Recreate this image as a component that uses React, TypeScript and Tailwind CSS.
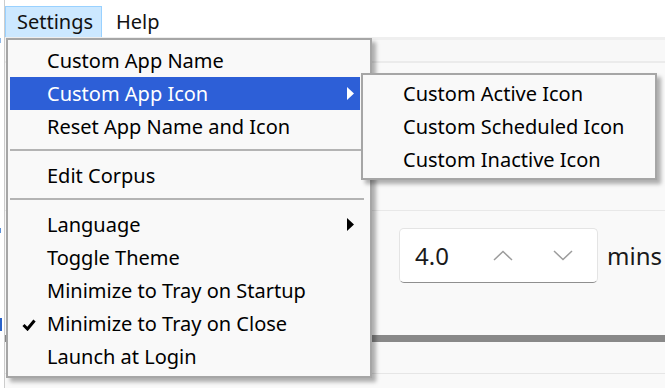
import React from "react";

function Arrow({ white }: { white?: boolean }) {
  return (
    <svg width="7" height="13" viewBox="0 0 7 13" className="block">
      <polygon points="0,0 7,6.5 0,13" fill={white ? "#ffffff" : "#000000"} />
    </svg>
  );
}

function Check() {
  return (
    <svg width="14" height="12" viewBox="0 0 14 12" className="block">
      <polyline points="1.5,6 5.5,10 12.5,1.5" fill="none" stroke="#000" strokeWidth="3" strokeLinejoin="miter" />
    </svg>
  );
}

function Chevron({ up }: { up?: boolean }) {
  return (
    <svg width="20" height="11" viewBox="0 0 20 11" className="block">
      <polyline
        points={up ? "1,10 10,1.5 19,10" : "1,1 10,9.5 19,1"}
        fill="none"
        stroke="#9c9c9c"
        strokeWidth="1.5"
      />
    </svg>
  );
}

function Row({
  label,
  active,
  sub,
  checked,
}: {
  label: string;
  active?: boolean;
  sub?: boolean;
  checked?: boolean;
}) {
  return (
    <div
      className={
        "relative ml-[2px] mr-[10px] h-[33px] flex items-center pl-[37px] pr-[6px] " +
        (active ? "bg-[#2d5fd7] text-white" : "text-black")
      }
    >
      {checked && (
        <div className="absolute left-[12px] top-[12px]">
          <Check />
        </div>
      )}
      <span className="flex-1 whitespace-nowrap">{label}</span>
      {sub && <Arrow white={active} />}
    </div>
  );
}

function Sep() {
  return (
    <div className="h-[16px] pt-[6px] ml-[2px] mr-[6px]">
      <div className="h-[2px] bg-[#b4b4b4]" />
    </div>
  );
}

export default function App() {
  return (
    <div className="relative w-[665px] h-[388px] overflow-hidden bg-white font-['Noto_Sans',sans-serif] text-[20px] leading-none text-black">
      <div className="flex h-full">
        <div className="w-[4px] shrink-0 bg-white" />
        <div className="flex-1 flex flex-col border-l border-[#cdcdcd]">
          {/* menubar */}
          <div className="h-[37px] shrink-0 bg-white flex items-start">
            <div className="mt-[6px] h-[32px] w-[97px] flex items-center pl-[11px] bg-[#cce8ff] border border-[#99d1ff] text-[#111]">
              Settings
            </div>
            <div className="mt-[6px] h-[32px] flex items-center pl-[14px] text-[#111]">Help</div>
          </div>
          {/* toolbar band */}
          <div className="h-[26px] shrink-0 border-t-[3px] border-t-[#efefef] border-b-2 border-b-[#ebebeb] bg-[#f8f8f8]" />
          {/* content */}
          <div className="flex-1 bg-[#f9f9f9] flex flex-col">
            <div className="h-[148px] shrink-0 border-b border-[#e8e8e8]" />
            <div className="mt-[17px] flex items-center text-[24px] text-[#1a1a1a]">
              <div className="ml-[394px] w-[199px] h-[55px] shrink-0 bg-white rounded-[5px] border border-[#e4e4e4] border-b-[#8f8f8f] flex items-center pl-[15px]">
                <span className="w-[78px]">4.0</span>
                <Chevron up />
                <div className="w-[40px]" />
                <Chevron />
              </div>
              <span className="ml-[9px] whitespace-nowrap">mins</span>
            </div>
            <div className="mt-[52px] h-[7px] shrink-0 bg-[#898989]" />
            <div className="h-[32px] shrink-0 border-b border-[#e6e6e6]" />
          </div>
        </div>
      </div>

      {/* tiny bits of a window behind */}
      <div className="absolute left-0 top-[38px] w-[1px] h-[5px] bg-[#8fb8e8]" />
      <div className="absolute left-0 top-[228px] w-[1px] h-[5px] bg-[#5b8fd6]" />
      <div className="absolute left-0 top-[318px] w-[2px] h-[13px] bg-[#2a62c9]" />

      {/* main menu */}
      <div className="absolute left-[6px] top-[38px] w-[366px] h-[340px] bg-[#f9f9f9] border-2 border-[#a6a6a6] pt-[4px] shadow-[4px_4px_4px_rgba(0,0,0,0.3)]">
        <Row label="Custom App Name" />
        <Row label="Custom App Icon" active sub />
        <Row label="Reset App Name and Icon" />
        <Sep />
        <Row label="Edit Corpus" />
        <Sep />
        <Row label="Language" sub />
        <Row label="Toggle Theme" />
        <Row label="Minimize to Tray on Startup" />
        <Row label="Minimize to Tray on Close" checked />
        <Row label="Launch at Login" />
      </div>

      {/* submenu */}
      <div className="absolute left-[361px] top-[73px] w-[296px] h-[107px] bg-[#f9f9f9] border-2 border-[#a6a6a6] pt-[2px] shadow-[4px_4px_4px_rgba(0,0,0,0.3)]">
        <div className="h-[33px] flex items-center pl-[40px] whitespace-nowrap">Custom Active Icon</div>
        <div className="h-[33px] flex items-center pl-[40px] whitespace-nowrap">Custom Scheduled Icon</div>
        <div className="h-[33px] flex items-center pl-[40px] whitespace-nowrap">Custom Inactive Icon</div>
      </div>
    </div>
  );
}
